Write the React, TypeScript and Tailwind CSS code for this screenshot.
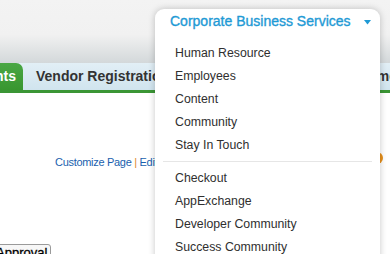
import React from "react";

const items1 = ["Human Resource", "Employees", "Content", "Community", "Stay In Touch"];
const items2 = ["Checkout", "AppExchange", "Developer Community", "Success Community"];

export default function App() {
  return (
    <div
      className="relative w-[390px] h-[254px] overflow-hidden bg-white"
      style={{ fontFamily: '"Liberation Sans", Arial, sans-serif' }}
    >
      {/* top grey header */}
      <div className="h-[63px] bg-gradient-to-b from-[#f3f3f3] via-[#f1f1f1] via-55% to-[#d3d8da]" />
      {/* tab bar */}
      <div className="flex h-[27px] items-stretch overflow-hidden bg-gradient-to-b from-[#e2eff6] to-[#d0e4ee]">
        <div className="flex w-[23px] shrink-0 items-center justify-end rounded-tr-[7px] bg-gradient-to-b from-[#4aa744] to-[#38962f] pr-[7px] text-[14px] font-bold text-white">
          <span className="whitespace-nowrap">nts</span>
        </div>
        <div className="flex shrink-0 items-center pl-[13px] text-[14px] font-bold text-[#333]">
          <span className="whitespace-nowrap">Vendor Registration</span>
        </div>
        <div className="flex-1" />
        <div className="mr-[-7px] flex shrink-0 items-center text-[14px] font-bold text-[#333]">
          <span className="whitespace-nowrap">Home</span>
        </div>
      </div>
      <div className="h-[3px] bg-[#3b9635]" />
      {/* content */}
      <div className="relative">
        <div className="pl-[55px] pt-[62px] text-[11px] leading-[14px] tracking-[-0.3px] text-[#1a5fae] whitespace-nowrap">
          Customize Page <span className="text-[#e0892a]">|</span> Edit Layout
        </div>
        <div className="absolute left-[371px] top-[59px] h-[12px] w-[12px] rounded-full bg-[#e8911c]" />
        <div className="mt-[75px] ml-[-8px] inline-block rounded-[3px] border border-[#9a9a9a] bg-[#f7f7f7] px-[3px] text-[13px] leading-[16px] text-black [-webkit-text-stroke:0.3px_#000]">
          Approval
        </div>
      </div>

      {/* dropdown menu */}
      <div className="absolute left-[155px] top-[9px] h-[260px] w-[225px] rounded-t-[9px] bg-white shadow-[0_0_7px_rgba(0,0,0,0.22)]">
        <div className="flex h-[33px] items-start pt-[2px] pl-[15px] pr-[9px]">
          <span className="text-[14px] leading-[20px] text-[#1f9ad5] whitespace-nowrap [-webkit-text-stroke:0.35px_#1f9ad5]">
            Corporate Business Services
          </span>
          <div className="flex-1" />
          <svg width="7" height="5" viewBox="0 0 7 5" className="mt-[9px]">
            <path d="M0 0 L7 0 L3.5 4.5 Z" fill="#1f9ad5" />
          </svg>
        </div>
        <div className="flex flex-col">
          {items1.map((t) => (
            <div key={t} className="h-[23px] pl-[20px] text-[12.3px] leading-[23px] text-[#2f2f2f] whitespace-nowrap">
              {t}
            </div>
          ))}
          <div className="mx-[8px] mt-[4px] mb-[5px] h-px bg-[#e6e6e6]" />
          {items2.map((t) => (
            <div key={t} className="h-[23px] pl-[20px] text-[12.3px] leading-[23px] text-[#2f2f2f] whitespace-nowrap">
              {t}
            </div>
          ))}
        </div>
      </div>
    </div>
  );
}
